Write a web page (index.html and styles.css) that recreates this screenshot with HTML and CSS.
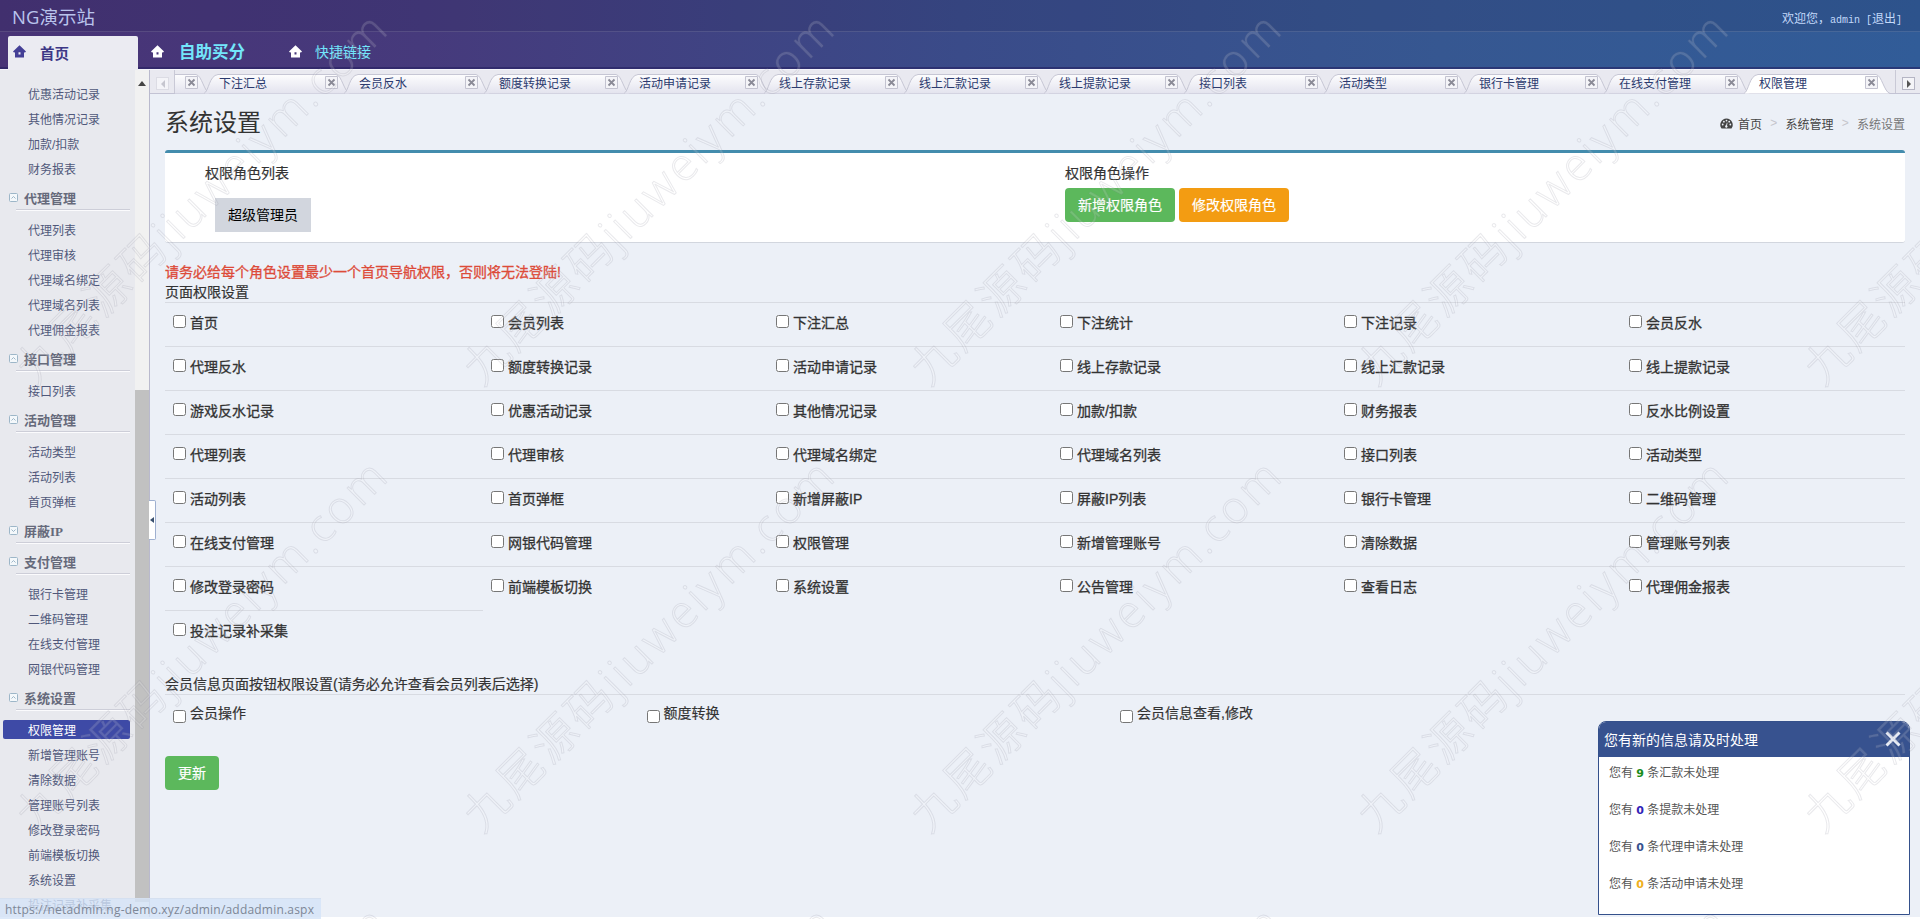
FILE: index.html
```html
<!DOCTYPE HTML>
<html>
<head>
<meta http-equiv="Content-Type" content="text/html; charset=utf-8">
<title>NG演示站</title>
<link rel="stylesheet" href="styles.css">
</head>
<body>
<svg class="defs">
  <symbol id="home" viewBox="0 0 13 13"><path fill-rule="evenodd" d="M6.500 .3L13 6.500l-1.200 1.200L11 7V12.500H2V7l-.8.700L0 6.500zM5.500 7.300v2.200h2V7.300z"/></symbol>
  <symbol id="tab" viewBox="0 0 146 20"><path d="M0 19.500C5 17 5 1.500 14 .5H132C138 1.500 140 18 146 19.500"/></symbol>
  <symbol id="cls" viewBox="0 0 13 13"><path d="M.5 .5h12v12H.5z" fill="#f4f4f8" stroke="#c3c3d0"/><path d="M3.500 3.500l6 6M9.500 3.500l-6 6" stroke="#8a8a96" stroke-width="1.800"/></symbol>
</svg>
<div class="header">
  <div class="top"><span class="logo">NG演示站</span><span class="welcome">欢迎您，<i>admin [</i>退出<i>]</i></span></div>
  <div class="nav">
    <a class="nav-item on"><svg class="ico"><use href="#home"/></svg>首页</a>
    <a class="nav-item buy"><svg class="ico"><use href="#home"/></svg>自助买分</a>
    <a class="nav-item quick"><svg class="ico"><use href="#home"/></svg>快捷链接</a>
  </div>
</div>
<div class="wrap">
  <div class="side">
    <div class="menu" id="menu"></div>
    <div class="scroll"><span class="up"></span><span class="thumb"></span></div>
  </div>
  <div class="main">
    <div class="tabbar">
      <div class="arr left"><span></span></div>
      <div class="tabs" id="tabs"></div>
      <div class="arr right"><span></span></div>
    </div>
    <div class="content">
      <div class="title">
        <h1>系统设置</h1>
        <div class="crumb">
          <svg class="dash" viewBox="0 0 13 11"><path d="M6.500 .5A6.300 6.300 0 0 0 1.500 10.500h10A6.300 6.300 0 0 0 6.500 .5z"/><g fill="#ecf0f6"><circle cx="2.700" cy="6.500" r=".9"/><circle cx="3.900" cy="3.700" r=".9"/><circle cx="6.500" cy="2.600" r=".9"/><circle cx="9.200" cy="3.700" r=".9"/><circle cx="10.300" cy="6.500" r=".9"/><path d="M6.900 4.500l.6.200-.5 2.800a1.200 1.200 0 1 1-.9-.2z"/></g></svg>
          <a>首页</a><b>&gt;</b><a>系统管理</a><b>&gt;</b><span>系统设置</span>
        </div>
      </div>
      <div class="box">
        <div class="role-list"><label>权限角色列表</label><button class="btn role">超级管理员</button></div>
        <div class="role-op"><label>权限角色操作</label><button class="btn green">新增权限角色</button><button class="btn orange">修改权限角色</button></div>
      </div>
      <p class="warn">请务必给每个角色设置最少一个首页导航权限，否则将无法登陆!</p>
      <p class="cap">页面权限设置</p>
      <div class="perm" id="perm"></div>
      <p class="cap cap2">会员信息页面按钮权限设置(请务必允许查看会员列表后选择)</p>
      <div class="perm2">
        <label><input type="checkbox">会员操作</label>
        <label><input type="checkbox">额度转换</label>
        <label><input type="checkbox">会员信息查看,修改</label>
      </div>
      <button class="btn green update">更新</button>
    </div>
    <div class="split"><span></span></div>
  </div>
</div>
<div class="pop">
  <div class="pop-head">您有新的信息请及时处理<svg class="x" viewBox="0 0 16 16"><path d="M1.500 1.500l13 13M14.500 1.500l-13 13"/></svg></div>
  <ul>
    <li>您有 <b class="c1">9</b> 条汇款未处理</li>
    <li>您有 <b class="c2">0</b> 条提款未处理</li>
    <li>您有 <b class="c3">0</b> 条代理申请未处理</li>
    <li>您有 <b class="c4">0</b> 条活动申请未处理</li>
  </ul>
</div>
<div class="status">https://netadmin.ng-demo.xyz/admin/addadmin.aspx</div>
<svg class="mark" width="1920" height="919">
  <pattern id="wm" x="-8" y="-11" width="447" height="447" patternUnits="userSpaceOnUse">
    <text transform="translate(43 398) rotate(-45)" textLength="501">九尾源码jiuweiym.com</text>
  </pattern>
  <rect width="1920" height="919" fill="url(#wm)"/>
</svg>
<script type="text/javascript" src="page.js"></script>
</body>
</html>
```
FILE: styles.css
```css
*{box-sizing:border-box;}
body{margin:0;height:919px;overflow:hidden;position:relative;font:12px "Liberation Sans","Noto Sans CJK SC",sans-serif;background:#fff;}
ul,p,h1{margin:0;padding:0;list-style:none;}
.defs{display:none;}

.header{height:70px;background:linear-gradient(90deg,#483376 0%,#463a7c 22%,#3a4b89 50%,#365791 75%,#315c98 100%);border-bottom:1px solid #f4f4fa;}
.top{height:32px;display:flex;justify-content:space-between;align-items:center;padding:0 18px 0 12px;background:rgba(20,20,60,.13);border-bottom:1px solid rgba(255,255,255,.12);}
.logo{font:18.5px/30px "Open Sans","Noto Sans CJK SC",sans-serif;color:#b9c4ec;padding-top:3px;}
.welcome{color:#c3d9fa;padding-top:4px;}
.welcome i{font:10px "Liberation Mono",monospace;}
.nav{height:37px;display:flex;padding-left:8px;border-bottom:2px solid rgba(35,30,95,.55);}
.nav-item{display:flex;align-items:center;color:#73e6fb;width:138px;}
.nav-item .ico{fill:#fff;}
.ico{width:13px;height:13px;}
.nav-item.on{width:130px;height:34px;margin-top:4px;padding:0 0 2px 5px;background:#ebebf2;border-radius:2px 2px 0 0;color:#3d3786;font-size:14.5px;font-weight:bold;}
.on .ico{fill:#443f96;margin-right:14px;margin-top:-2px;}
.buy{margin-left:13px;font-size:16.5px;font-weight:bold;padding-top:2px;}
.buy .ico{margin-right:15px;margin-top:2px;}
.quick{font-size:14px;padding-top:2px;}
.quick .ico{margin-right:13px;margin-top:2px;}

.wrap{display:flex;height:847px;}
.side{width:150px;display:flex;background:#e8e9ee;border-right:1px solid #b9b9cd;}
.menu{flex:1;padding-top:11px;overflow:hidden;color:#50587a;}
.menu h3{margin:0 5px 0 8px;height:31px;display:flex;align-items:flex-start;font:bold 13px/24px "Liberation Serif","Noto Sans CJK SC",serif;padding-top:6px;color:#666a7b;background:linear-gradient(#cdced8,#cdced8) 8px 28px/100% 1px no-repeat,linear-gradient(#fbfbfd,#fbfbfd) 8px 29px/100% 1px no-repeat;}
.menu h3 svg{width:9px;height:9px;margin:6px 6px 0 1px;fill:#f4f8fb;stroke:#9db6c8;}
.menu ul{padding-top:5px;}
.menu ul:first-child{padding-top:0;}
.menu ul:empty{display:none;}
.menu li{height:25px;line-height:28px;padding-left:28px;}
.menu li.on{height:19px;line-height:22px;margin:3px 5px 3px 3px;padding-left:25px;background:#3e4aa6;border-radius:2px;color:#fff;}
.scroll{width:14px;background:#f1f1f1;display:flex;flex-direction:column;}
.up{border:4px solid transparent;border-top:0;border-bottom:5px solid #444;margin:11px 0 0 3px;width:8px;height:5px;}
.thumb{height:512px;margin-top:304px;background:#c1c1c1;}

.main{flex:1;position:relative;background:#ecf0f7;display:flex;flex-direction:column;min-width:0;}
.tabbar{height:24px;display:flex;background:#e9e9f0;border-bottom:1px solid #c3c3d4;}
.arr{width:25px;padding:7px 0 0 6px;border-right:1px solid #c9c9d6;}
.arr span{display:flex;align-items:center;justify-content:center;width:13px;height:13px;border:1px solid #dcdce4;background:#f4f4f8;}
.arr span:after{content:"";width:0;height:0;border:4px solid transparent;border-left:0;border-right-color:#c6c6cf;}
.arr.right{border:0;border-left:1px solid #c9c9d6;}
.arr.right span{border-color:#b5b5c4;}
.arr.right span:after{border:4px solid transparent;border-right:0;border-left-color:#555;}
.tabs{flex:1;display:flex;overflow:hidden;height:24px;}
.tab{position:relative;flex:0 0 140px;display:flex;padding:4px 6px 0 15px;justify-content:space-between;color:#2b3a6e;}
.tab:first-child{margin-left:-111px;}
.tab span{position:relative;line-height:21px;}
.tab .shape{position:absolute;left:0;top:4px;width:146px;height:20px;fill:url(#tg);stroke:#c6c6d4;}
.tab.on .shape{fill:#fff;}
.tab .cls{position:relative;width:13px;height:13px;margin-top:2px;}

.content{padding:0 15px;color:#333;font-size:14px;}
.title{height:56px;display:flex;justify-content:space-between;align-items:center;}
.title h1{font-size:24px;font-weight:normal;padding-bottom:4px;}
.crumb{display:flex;align-items:center;font-size:12px;padding-top:2px;}
.dash{width:13px;height:11px;margin-right:5px;fill:#444;}
.crumb a{color:#444;}
.crumb b{width:23.5px;text-align:center;font-weight:normal;color:#c5c5cc;}
.crumb span{color:#777;}
.box{height:93px;border-top:3px solid #438cad;border-bottom:1px solid #d2d6de;border-radius:3px;background:#fff;display:flex;padding:10px 0 0 40px;}
.box label{display:block;line-height:20px;-webkit-text-stroke:.2px;}
.role-list{width:860px;}
.btn{height:34px;border:0;border-radius:4px;padding:0 12px 2px;margin:0;font:14px "Liberation Sans","Noto Sans CJK SC",sans-serif;color:#fff;-webkit-text-stroke:.2px;}
.role-op .btn{margin:5px 4px 0 0;width:110px;}
.btn.green{background:#5cb85c;}
.btn.orange{background:#f39c12;}
.btn.role{background:#d2d6de;color:#000;border-radius:0;margin:15px 0 0 10px;padding:0 13px 2px;width:96px;-webkit-text-stroke:0;}
.warn{color:#dd4b39;line-height:20px;margin-top:19px;-webkit-text-stroke:.3px;}
.cap{line-height:20px;-webkit-text-stroke:.2px;}
.perm{display:grid;grid-template-columns:318px 285px 284px 284px 285px 284px;}
.perm label{height:44px;border-top:1px solid #d8dbe2;padding:11px 0 0 8px;display:flex;line-height:18px;-webkit-text-stroke:.3px;}
.perm input,.perm2 input{width:13px;height:13px;margin:1px 4px 0 0;}
.cap2{margin-top:20px;}
.perm2{display:flex;border-top:1px solid #d8dbe2;-webkit-text-stroke:.2px;height:62px;}
.perm2 label{width:473.5px;padding:8px 0 0 8px;display:flex;line-height:20px;}
.perm2 input{margin-top:7px;}
.update{width:54px;}
.split{position:absolute;left:-1px;top:430px;width:7px;height:40px;background:#fff;border:1px solid #9fb0d0;border-left:0;border-radius:0 2px 2px 0;}
.split span{display:block;margin:16px 0 0 1px;width:4px;height:6px;border:3px solid transparent;border-left:0;border-right:4px solid #39506e;}

.pop{position:absolute;left:1598px;top:721px;width:312px;height:194px;background:#fff;border:1px solid #34508b;border-radius:8px 8px 0 0;overflow:hidden;}
.pop-head{height:35px;background:#37528f;color:#fff;font-size:14px;display:flex;align-items:center;justify-content:space-between;padding:0 8px 2px 5px;}
.x{width:16px;height:16px;stroke:#e8ecf5;stroke-width:3;}
.pop ul{padding-left:10px;color:#555;}
.pop li{height:37px;line-height:33px;}
.pop b{font:bold 11px "DejaVu Sans",sans-serif;}
.c1{color:#1b8c1b;}
.c2{color:#3224b8;}
.c3{color:#37528f;}
.c4{color:#efb020;}
.status{position:absolute;left:0;top:898px;width:321px;height:21px;padding-left:5px;background:rgba(213,227,248,.8);font:12px/21px "Open Sans",sans-serif;letter-spacing:.2px;color:#7d8796;white-space:nowrap;border-top:1px solid #d5e0f0;}
.mark{position:absolute;left:0;top:0;pointer-events:none;}
.mark text{font:300 45px "Open Sans","Noto Sans CJK SC",sans-serif;fill:rgba(255,255,255,.14);stroke:rgba(120,120,135,.16);stroke-width:1;}
```
FILE: page.js
```javascript
var menus = [
  ['', '优惠活动记录,其他情况记录,加款/扣款,财务报表'],
  ['代理管理', '代理列表,代理审核,代理域名绑定,代理域名列表,代理佣金报表'],
  ['接口管理', '接口列表'],
  ['活动管理', '活动类型,活动列表,首页弹框'],
  ['屏蔽IP', ''],
  ['支付管理', '银行卡管理,二维码管理,在线支付管理,网银代码管理'],
  ['系统设置', '权限管理,新增管理账号,清除数据,管理账号列表,修改登录密码,前端模板切换,系统设置,投注记录补采集']
];
var tabs = ',下注汇总,会员反水,额度转换记录,活动申请记录,线上存款记录,线上汇款记录,线上提款记录,接口列表,活动类型,银行卡管理,在线支付管理,权限管理'.split(',');
var perms = ('首页,会员列表,下注汇总,下注统计,下注记录,会员反水,代理反水,额度转换记录,活动申请记录,线上存款记录,线上汇款记录,线上提款记录,' +
  '游戏反水记录,优惠活动记录,其他情况记录,加款/扣款,财务报表,反水比例设置,代理列表,代理审核,代理域名绑定,代理域名列表,接口列表,活动类型,' +
  '活动列表,首页弹框,新增屏蔽IP,屏蔽IP列表,银行卡管理,二维码管理,在线支付管理,网银代码管理,权限管理,新增管理账号,清除数据,管理账号列表,' +
  '修改登录密码,前端模板切换,系统设置,公告管理,查看日志,代理佣金报表,投注记录补采集').split(',');

var html = '';
for(var i = 0; i < menus.length; i++){
  if(menus[i][0]){
    var d = menus[i][1] ? 'M2.5 5.5l2-2 2 2' : 'M2.5 3.5l2 2 2-2';
    html += '<h3><svg viewBox="0 0 9 9"><rect x=".5" y=".5" width="8" height="8" rx="1"/><path d="' + d + '"/></svg>' + menus[i][0] + '</h3>';
  }
  html += '<ul>';
  var subs = menus[i][1] ? menus[i][1].split(',') : [];
  for(var j = 0; j < subs.length; j++){
    html += '<li' + (subs[j] == '权限管理' ? ' class="on"' : '') + '>' + subs[j] + '</li>';
  }
  html += '</ul>';
}
document.getElementById('menu').innerHTML = html;

html = '';
for(var i = 0; i < tabs.length; i++){
  html += '<div class="tab' + (i == tabs.length - 1 ? ' on' : '') + '"><svg class="shape"><defs><linearGradient id="tg" x2="0" y2="1"><stop offset="0" stop-color="#fdfdfe"/><stop offset="1" stop-color="#e3e3ee"/></linearGradient></defs><use href="#tab"/></svg><span>' + tabs[i] + '</span><svg class="cls"><use href="#cls"/></svg></div>';
}
document.getElementById('tabs').innerHTML = html;

html = '';
for(var i = 0; i < perms.length; i++){
  html += '<label><input type="checkbox">' + perms[i] + '</label>';
}
document.getElementById('perm').innerHTML = html;
```
